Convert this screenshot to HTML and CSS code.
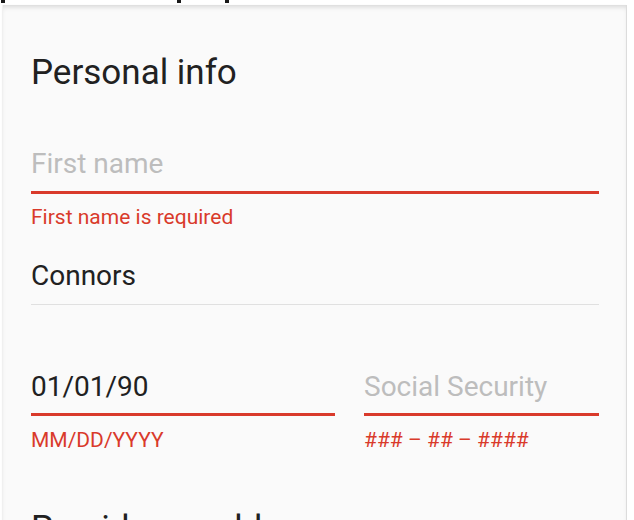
FILE: index.html
```html
<!DOCTYPE html>
<html>
<head>
<meta charset="utf-8">
<link rel="stylesheet" href="styles.css">
</head>
<body>
<div class="top-strip">
  <span class="mark m1"></span>
  <span class="mark m2"></span>
  <span class="mark m3"></span>
</div>
<main class="card">
  <h2 class="title">Personal info</h2>

  <div class="field error first">
    <div class="input placeholder">First name</div>
  </div>
  <div class="helper">First name is required</div>

  <div class="field plain">
    <div class="input">Connors</div>
  </div>

  <div class="row">
    <div class="col">
      <div class="field error">
        <div class="input">01/01/90</div>
      </div>
      <div class="helper">MM/DD/YYYY</div>
    </div>
    <div class="col">
      <div class="field error">
        <div class="input placeholder">Social Security</div>
      </div>
      <div class="helper">### – ## – ####</div>
    </div>
  </div>

  <h2 class="title next">Provide an address</h2>
</main>
</body>
</html>
```

FILE: styles.css
```css
html, body {
  margin: 0;
  padding: 0;
  background: #ffffff;
  overflow: hidden;
  height: 520px;
}

body {
  font-family: Roboto, "Noto Sans", sans-serif;
  color: #212121;
}

.top-strip {
  height: 5px;
  display: flex;
  align-items: flex-start;
}

.mark {
  display: block;
  height: 3px;
  background: #1a1a1a;
}

.m1 { width: 4px; margin-left: 1px; }
.m2 { width: 4px; margin-left: 172px; }
.m3 { width: 4px; margin-left: 44px; }

.card {
  box-sizing: border-box;
  margin-left: 3px;
  width: 624px;
  padding: 48px 27px 0 28px;
  background: #fafafa;
  border-right: 1px solid #dcdcdc;
  box-shadow: inset 0 4px 5px -2px rgba(0, 0, 0, 0.14), -1px 0 1px rgba(0, 0, 0, 0.06);
  min-height: 600px;
}

.title {
  margin: 0;
  font-size: 35px;
  font-weight: 400;
  line-height: 40px;
  color: #212121;
  letter-spacing: 0;
}

.title.next {
  margin-top: 57px;
}

.field {
  padding-bottom: 9px;
}

.field.first {
  margin-top: 53px;
}

.field.error {
  border-bottom: 3px solid #d93a2b;
}

.field.plain {
  margin-top: 29px;
  padding-bottom: 10px;
  border-bottom: 1px solid #e0e0e0;
}

.input {
  font-size: 28px;
  line-height: 36px;
  color: #212121;
}

.input.placeholder {
  color: #bdbdbd;
}

.helper {
  margin-top: 11px;
  font-size: 21px;
  line-height: 24px;
  color: #d93a2b;
}

.row {
  margin-top: 64px;
  display: grid;
  grid-template-columns: 304px 1fr;
  column-gap: 29px;
}

.row .field {
  padding-bottom: 8px;
}

.row .helper {
  margin-top: 12px;
}
```
